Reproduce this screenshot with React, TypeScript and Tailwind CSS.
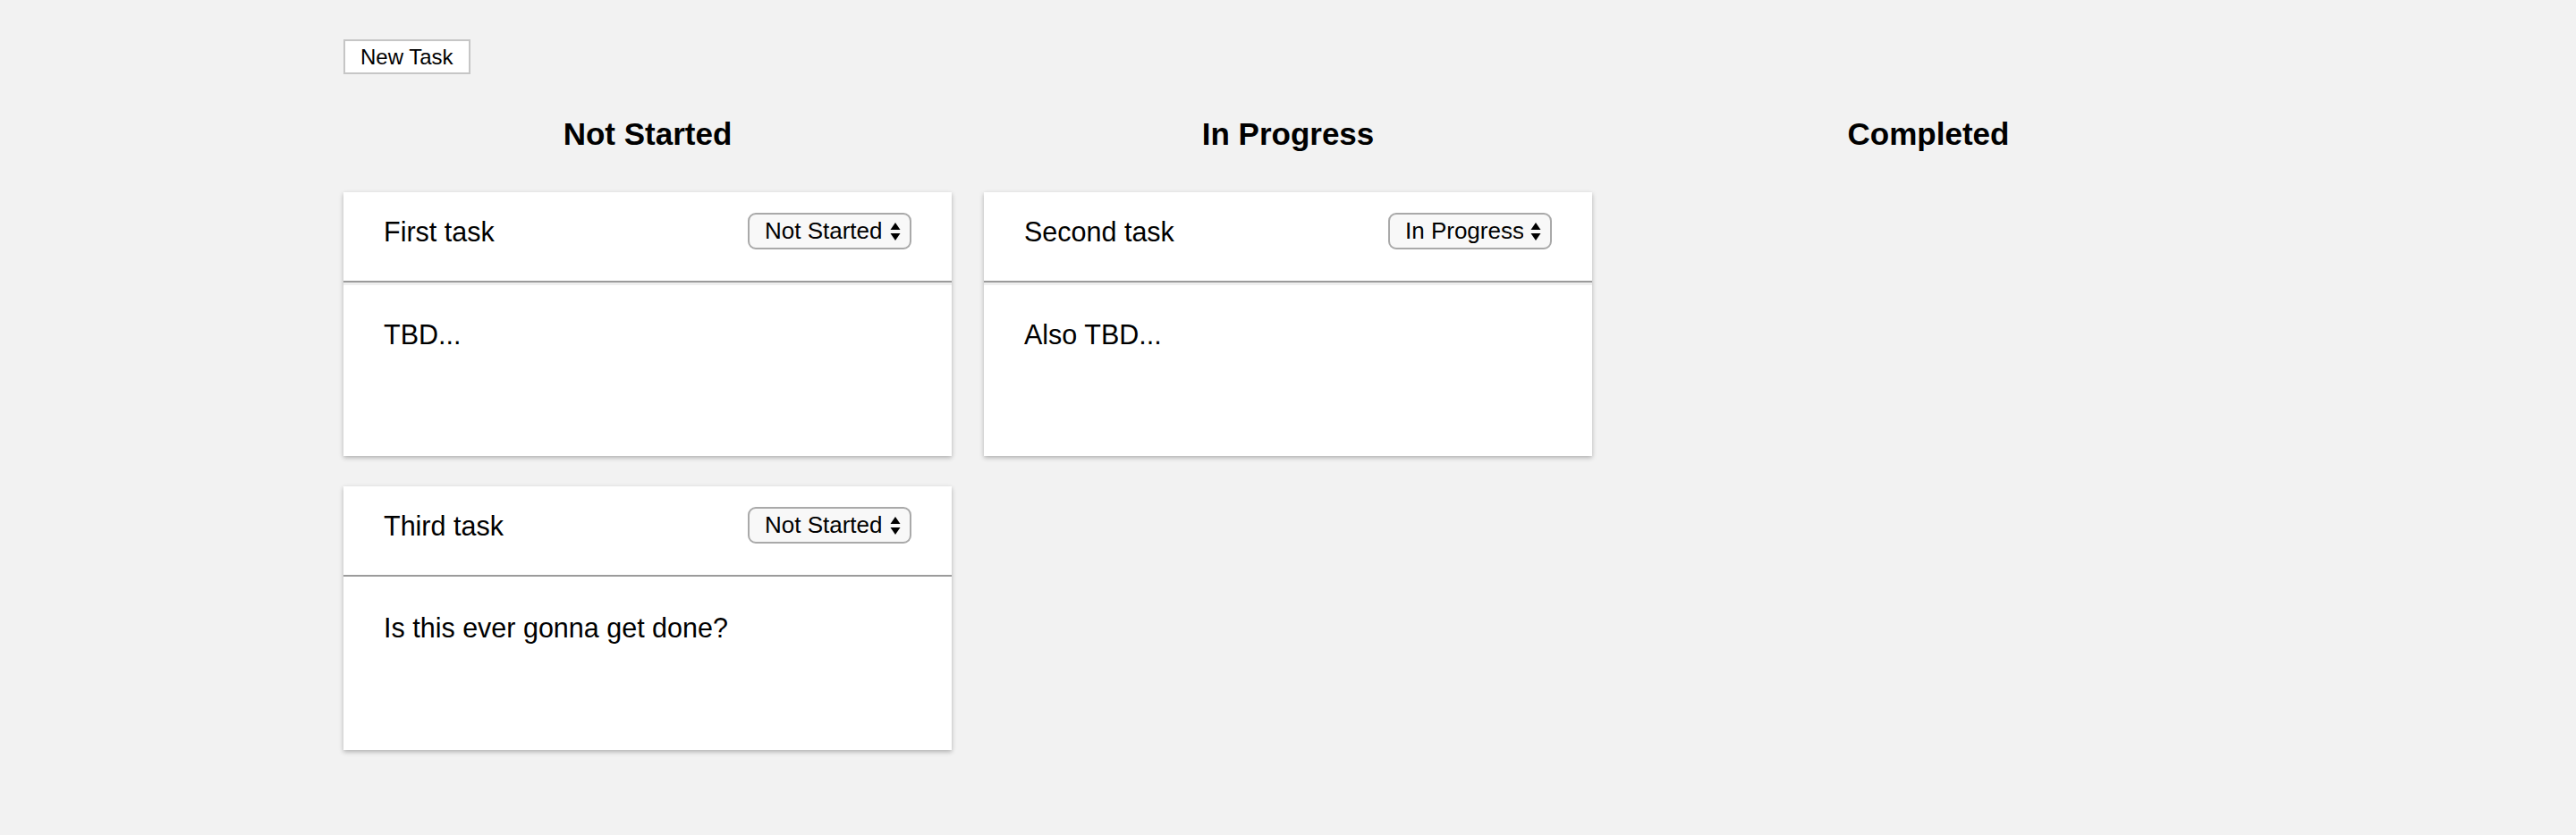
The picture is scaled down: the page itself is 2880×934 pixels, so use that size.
import { useState } from 'react';

type Status = 'Not Started' | 'In Progress' | 'Completed';

interface Task {
  id: number;
  title: string;
  description: string;
  status: Status;
  edge?: boolean;
}

const STATUSES: Status[] = ['Not Started', 'In Progress', 'Completed'];

const initialTasks: Task[] = [
  { id: 1, title: 'First task', description: 'TBD...', status: 'Not Started', edge: true },
  { id: 2, title: 'Second task', description: 'Also TBD...', status: 'In Progress', edge: true },
  { id: 3, title: 'Third task', description: 'Is this ever gonna get done?', status: 'Not Started' },
];

function StatusSelect({ value, onChange }: { value: Status; onChange: (s: Status) => void }) {
  return (
    <div className="relative">
      <select
        value={value}
        onChange={(e) => onChange(e.target.value as Status)}
        className="appearance-none h-[41px] w-[183px] rounded-[9px] border-2 border-[#a9a9a9] bg-[#f8f8f8] pl-[17px] pr-[30px] text-[26px] leading-[37px] text-black outline-none"
      >
        {STATUSES.map((s) => (
          <option key={s} value={s}>
            {s}
          </option>
        ))}
      </select>
      {/* up / down arrows */}
      <svg
        className="pointer-events-none absolute right-[12px] top-[11px]"
        width="12"
        height="20"
        viewBox="0 0 12 20"
      >
        <path d="M6 0 L11.5 8 L0.5 8 Z" fill="#000" />
        <path d="M6 20 L11.5 12 L0.5 12 Z" fill="#000" />
      </svg>
    </div>
  );
}

function TaskCard({ task, onStatus }: { task: Task; onStatus: (id: number, s: Status) => void }) {
  return (
    <div className="bg-white shadow-[0_2px_5px_rgba(0,0,0,0.28)]">
      <div className="h-[101px] pt-[23px] px-[45px] border-b-2 border-[#9b9b9b]">
        <div className="flex h-[41px] items-center justify-between">
          <span className="text-[30.5px] leading-[34px]">{task.title}</span>
          <StatusSelect value={task.status} onChange={(s) => onStatus(task.id, s)} />
        </div>
      </div>
      <div
        className={`h-[194px] px-[45px] ${
          task.edge ? 'border-t-[3px] border-[#efefef] pt-[38px]' : 'pt-[40px]'
        }`}
      >
        <p className="text-[30.5px] leading-[34px]">{task.description}</p>
      </div>
    </div>
  );
}

export default function App() {
  const [tasks, setTasks] = useState<Task[]>(initialTasks);

  const updateStatus = (id: number, status: Status) => {
    setTasks((prev) => prev.map((t) => (t.id === id ? { ...t, status } : t)));
  };

  const addTask = () => {
    setTasks((prev) => [
      ...prev,
      { id: prev.length + 1, title: 'New task', description: '', status: 'Not Started' },
    ]);
  };

  return (
    <div className="min-h-[934px] bg-[#f2f2f2] pt-[44px] pl-[384px] text-black font-['Liberation_Sans',Arial,sans-serif]">
      <button
        onClick={addTask}
        className="flex h-[39px] items-center border-2 border-[#c6c6c6] bg-white px-[17px] text-[24px] leading-[28px]"
      >
        New Task
      </button>

      <div className="mt-[46px] grid grid-cols-[680px_680px_680px] gap-x-[36px]">
        {STATUSES.map((status) => (
          <div key={status} className="flex flex-col">
            <h2 className="mb-[44px] text-center text-[35px] font-bold leading-[42px]">{status}</h2>
            <div className="flex flex-col gap-[34px]">
              {tasks
                .filter((t) => t.status === status)
                .map((t) => (
                  <TaskCard key={t.id} task={t} onStatus={updateStatus} />
                ))}
            </div>
          </div>
        ))}
      </div>
    </div>
  );
}
